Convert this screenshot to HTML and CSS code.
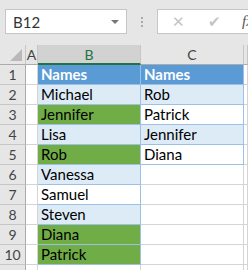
FILE: index.html
```html
<html lang="en">

<head>
    <meta charset="UTF-8">
    <title>Names</title>
    <link rel="stylesheet" href="styles.css">
</head>

<body>
    <div class="topbar">
        <div class="namebox">
            <span>B12</span>
            <span class="caret"></span>
        </div>
        <div class="dots"><i></i><i></i><i></i></div>
        <div class="formula">
            <span class="fbtn">&#x2715;</span>
            <span class="fbtn">&#x2714;</span>
            <span class="fx">fx</span>
        </div>
    </div>

    <div class="sheet">
        <!-- header row -->
        <div class="hd corner"><div class="tri"></div></div>
        <div class="hd col">A</div>
        <div class="hd col sel">B</div>
        <div class="hd col">C</div>
        <div class="hd col"></div>

        <div class="hd rn">1</div><div class="c"></div>
        <div class="c t head">Names</div><div class="c t head">Names</div><div class="c"></div>

        <div class="hd rn">2</div><div class="c"></div>
        <div class="c t band">Michael</div><div class="c t band">Rob</div><div class="c"></div>

        <div class="hd rn">3</div><div class="c"></div>
        <div class="c t green">Jennifer</div><div class="c t">Patrick</div><div class="c"></div>

        <div class="hd rn">4</div><div class="c"></div>
        <div class="c t band">Lisa</div><div class="c t band">Jennifer</div><div class="c"></div>

        <div class="hd rn">5</div><div class="c"></div>
        <div class="c t green">Rob</div><div class="c t">Diana</div><div class="c"></div>

        <div class="hd rn">6</div><div class="c"></div>
        <div class="c t band">Vanessa</div><div class="c"></div><div class="c"></div>

        <div class="hd rn">7</div><div class="c"></div>
        <div class="c t">Samuel</div><div class="c"></div><div class="c"></div>

        <div class="hd rn">8</div><div class="c"></div>
        <div class="c t band">Steven</div><div class="c"></div><div class="c"></div>

        <div class="hd rn">9</div><div class="c"></div>
        <div class="c t green">Diana</div><div class="c"></div><div class="c"></div>

        <div class="hd rn">10</div><div class="c"></div>
        <div class="c t green">Patrick</div><div class="c"></div><div class="c"></div>

        <div class="hd rn"></div><div class="c"></div>
        <div class="c"></div><div class="c"></div><div class="c"></div>
    </div>
</body>

</html>
```

FILE: styles.css
```css
html,
body {
    margin: 0px;
    padding: 0px;
    overflow: hidden;
    background: #fff;
    font-family: Lato, "Liberation Sans", sans-serif;
}

.topbar {
    height: 45px;
    background: #e6e6e6;
    display: flex;
    align-items: flex-start;
    padding-top: 9px;
    box-sizing: border-box;
}

.namebox {
    flex-shrink: 0;
    margin-left: 5px;
    width: 122px;
    height: 25px;
    box-sizing: border-box;
    background: #fff;
    border: 1px solid #c6c6c6;
    display: flex;
    align-items: center;
    justify-content: space-between;
    padding: 0 7px 0 7px;
    font-size: 15px;
    color: #333;
}

.caret {
    width: 0;
    height: 0;
    border-left: 4px solid transparent;
    border-right: 4px solid transparent;
    border-top: 4px solid #777;
}

.dots {
    flex-shrink: 0;
    width: 30px;
    height: 25px;
    display: flex;
    flex-direction: column;
    align-items: center;
    justify-content: center;
    gap: 2px;
}

.dots i {
    width: 2px;
    height: 2px;
    background: #aaa;
}

.formula {
    flex: 1;
    min-width: 0;
    overflow: hidden;
    white-space: nowrap;
    height: 25px;
    box-sizing: border-box;
    background: #fff;
    border: 1px solid #c6c6c6;
    border-right: none;
    display: flex;
    align-items: center;
    padding-left: 13px;
    gap: 22px;
    color: #c4c4c4;
    font-size: 15px;
}

.fbtn {
    flex-shrink: 0;
    width: 14px;
    text-align: center;
}

.fx {
    flex-shrink: 0;
    color: #555;
    font-style: italic;
    font-family: "Liberation Serif", serif;
    margin-left: -1px;
}

.sheet {
    display: grid;
    grid-template-columns: 26px 12px 103px 103px 1fr;
    grid-auto-rows: 20px;
    font-size: 15px;
}

.sheet div {
    box-sizing: border-box;
}

.c {
    border-right: 1px solid #d4d4d4;
    border-bottom: 1px solid #d4d4d4;
}

.hd {
    background: #e6e6e6;
    border-right: 1px solid #c6c6c6;
    border-bottom: 1px solid #c6c6c6;
    color: #444;
    display: flex;
    align-items: center;
    justify-content: center;
    font-size: 14px;
}

.corner {
    justify-content: flex-end;
    align-items: flex-end;
    padding: 0 3px 3px 0;
    border-bottom-color: #ababab;
}

.tri {
    width: 12px;
    height: 12px;
    background: #b9b9b9;
    clip-path: polygon(100% 0, 100% 100%, 0 100%);
}

.col {
    border-bottom-color: #ababab;
}

.col.sel {
    background: #d2d2d2;
    color: #217346;
    border-bottom: 2px solid #217346;
}

.rn {
    border-right-color: #ababab;
}

.t {
    display: flex;
    align-items: flex-end;
    padding: 0 0 1px 3px;
    color: #000;
    border-right-color: #9bc2e6;
    border-bottom-color: #9bc2e6;
}

.head {
    background: #5b9bd5;
    color: #fff;
    font-weight: bold;
}

.band {
    background: #ddebf7;
}

.green {
    background: #70ad47;
}
```
